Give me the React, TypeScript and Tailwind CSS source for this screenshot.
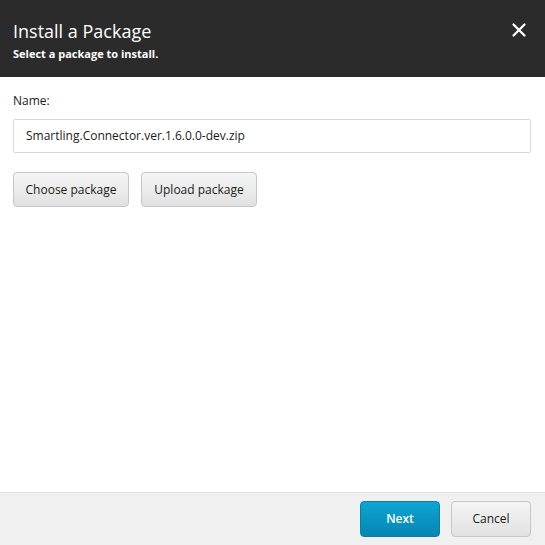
import { X } from "lucide-react";

export default function App() {
  return (
    <div className="w-[545px] h-[545px] flex flex-col bg-white font-['Open_Sans',sans-serif] text-[#1b1b1b]">
      <header className="h-[77px] shrink-0 bg-[#2b2b2b] flex items-start justify-between pl-[13px] pr-[15px] pt-[19px]">
        <div>
          <h1 className="text-[18px] leading-[24px] text-white mb-[3px]">Install a Package</h1>
          <p className="text-[11px] leading-[16px] font-bold text-white">Select a package to install.</p>
        </div>
        <button className="mt-0 text-white" aria-label="Close">
          <X size={22} strokeWidth={2.5} />
        </button>
      </header>

      <main className="flex-1 px-[13px] pt-[15px]">
        <label className="block text-[12px] leading-[17px] mb-[10px]">Name:</label>
        <div className="h-[34px] w-[518px] border border-[#d8d8d8] rounded-[2px] flex items-center px-[12px] text-[12px]">
          Smartling.Connector.ver.1.6.0.0-dev.zip
        </div>
        <div className="flex gap-[12px] mt-[19px]">
          <button className="h-[35px] w-[116px] rounded-[4px] border border-[#c6c6c6] bg-gradient-to-b from-[#f5f5f5] to-[#e1e1e1] text-[12px] text-[#1b1b1b]">
            Choose package
          </button>
          <button className="h-[35px] w-[116px] rounded-[4px] border border-[#c6c6c6] bg-gradient-to-b from-[#f5f5f5] to-[#e1e1e1] text-[12px] text-[#1b1b1b]">
            Upload package
          </button>
        </div>
      </main>

      <footer className="h-[53px] shrink-0 bg-[#f0f0f0] border-t border-[#e0e0e0] flex items-start justify-end gap-[11px] pr-[14px] pt-[8px]">
        <button className="h-[36px] w-[80px] rounded-[4px] border border-[#0b7ea8] bg-gradient-to-b from-[#0ea5d2] to-[#0686b4] text-white text-[12px] font-semibold">
          Next
        </button>
        <button className="h-[36px] w-[80px] rounded-[4px] border border-[#c6c6c6] bg-gradient-to-b from-[#f5f5f5] to-[#e1e1e1] text-[12px] text-[#1b1b1b]">
          Cancel
        </button>
      </footer>
    </div>
  );
}
